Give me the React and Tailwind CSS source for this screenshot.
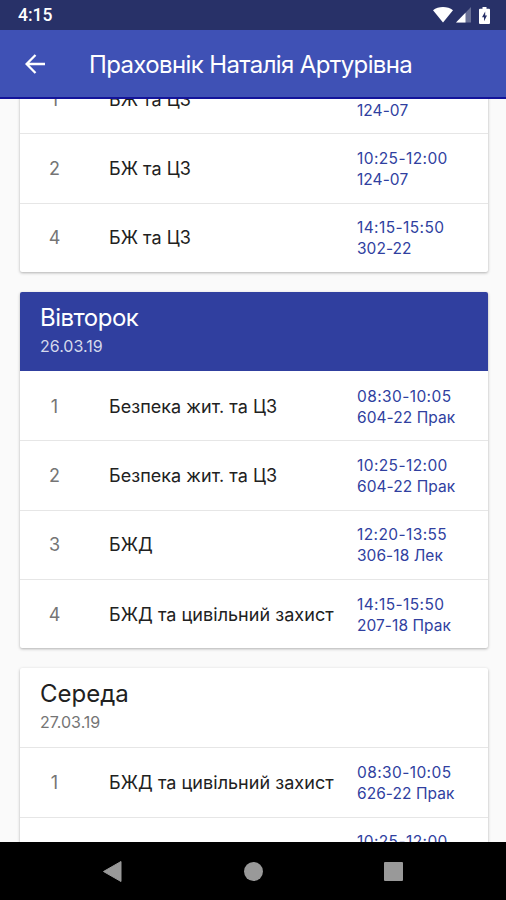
import React from "react";

const days = [
  {
    id: 1,
    lessons: [
      { num: 1, name: "БЖ та ЦЗ", time: "08:30-10:05", room: "124-07" },
      { num: 2, name: "БЖ та ЦЗ", time: "10:25-12:00", room: "124-07" },
      { num: 4, name: "БЖ та ЦЗ", time: "14:15-15:50", room: "302-22" },
    ],
  },
  {
    id: 2,
    title: "Вівторок",
    date: "26.03.19",
    current: true,
    lessons: [
      { num: 1, name: "Безпека жит. та ЦЗ", time: "08:30-10:05", room: "604-22 Прак" },
      { num: 2, name: "Безпека жит. та ЦЗ", time: "10:25-12:00", room: "604-22 Прак" },
      { num: 3, name: "БЖД", time: "12:20-13:55", room: "306-18 Лек" },
      { num: 4, name: "БЖД та цивільний захист", time: "14:15-15:50", room: "207-18 Прак" },
    ],
  },
  {
    id: 3,
    title: "Середа",
    date: "27.03.19",
    lessons: [
      { num: 1, name: "БЖД та цивільний захист", time: "08:30-10:05", room: "626-22 Прак" },
      { num: 2, name: "БЖД та цивільний захист", time: "10:25-12:00", room: "626-22 Прак" },
    ],
  },
];

const StatusBar = () => (
  <div className="flex h-[30px] shrink-0 items-center justify-between bg-[#283168] pl-[18px] pr-4 text-white">
    <span className="pt-[2px] font-[Roboto,sans-serif] text-[17.5px] font-medium leading-none">4:15</span>
    <div className="flex items-center">
      <svg width="20" height="16" viewBox="0 0 20 16" fill="currentColor">
        <path d="M0 3.2C2.8 1 6.2 0 10 0s7.2 1 10 3.2L10 15.5z" />
      </svg>
      <svg className="ml-[3px]" width="15" height="16" viewBox="0 0 15 16" fill="currentColor">
        <path d="M15 0v15.5H0z" opacity="0.3" />
        <path d="M9.5 5.7v9.8H0z" />
      </svg>
      <svg className="ml-2" width="11" height="17" viewBox="0 0 11 17">
        <path d="M3.5 0h4v1.8H10a1 1 0 0 1 1 1V16a1 1 0 0 1-1 1H1a1 1 0 0 1-1-1V2.8a1 1 0 0 1 1-1h2.5z" fill="currentColor" />
        <path d="M6.2 4.5 3 10.2h2v4L8 8.600H6.2z" fill="#283168" />
      </svg>
    </div>
  </div>
);

const AppBar = () => (
  <div className="flex h-[69px] shrink-0 items-center border-b-2 border-[#13139a] bg-[#3f51b5] pl-[25px] text-white">
    <svg width="20" height="20" viewBox="0 0 20 20" fill="none" stroke="currentColor" strokeWidth="2.3">
      <path d="M20 10H2M10.5 1 1.6 10l8.900 9" />
    </svg>
    <h1 className="ml-[44px] whitespace-nowrap pt-[2px] text-[24px] leading-none tracking-[-0.63px]">Праховнік Наталія Артурівна</h1>
  </div>
);

const Lesson = ({ lesson, first }) => (
  <div className={first ? "flex h-[69.33px] items-center pt-px" : "flex h-[69.33px] items-center border-t border-[#e6e6e6]"}>
    <span className="w-[69px] text-center text-[18px] text-[#757575]">{lesson.num}</span>
    <span className="ml-5 w-[248px] whitespace-nowrap text-[18px] tracking-[0.04px] text-[#212121]">{lesson.name}</span>
    <div className="whitespace-nowrap pt-px text-[15.5px] leading-[21px] text-[#303f9f]">
      <p className="tracking-[0.4px]">{lesson.time}</p>
      <p className="tracking-[0.05px]">{lesson.room}</p>
    </div>
  </div>
);

const DayCard = ({ day }) => (
  <div className="w-[467.5px] shrink-0 overflow-hidden rounded-[2px] bg-white shadow-[0_1px_3px_rgba(0,0,0,0.3)]">
    {day.title && (
      <div
        className={
          day.current
            ? "h-[79px] bg-[#303f9f] px-5 pt-[11px] text-white"
            : "h-[79px] px-5 pt-[11px] text-[#212121]"
        }
      >
        <h2 className={day.current ? "text-[24px] leading-[29px] tracking-[-0.5px]" : "text-[24px] leading-[29px]"}>{day.title}</h2>
        <p className={day.current ? "mt-1 text-[16px] leading-5 text-[#d5d9ec]" : "mt-1 text-[16px] leading-5 text-[#757575]"}>
          {day.date}
        </p>
      </div>
    )}
    {day.lessons.map((lesson, index) => (
      <Lesson key={lesson.num} lesson={lesson} first={index === 0 && day.current} />
    ))}
  </div>
);

const NavBar = () => (
  <div className="flex h-[58px] shrink-0 items-center bg-black pl-[103px] text-[#999999]">
    <svg width="19" height="21" viewBox="0 0 19 21" fill="currentColor">
      <path d="M18 .5v20L.5 10.5z" stroke="currentColor" strokeLinejoin="round" />
    </svg>
    <div className="ml-[122px] h-[19px] w-[19px] rounded-full bg-[#999999]" />
    <div className="ml-[121px] h-[19px] w-[19px] rounded-[1px] bg-[#999999]" />
  </div>
);

const App = () => {
  return (
    <div className="flex h-[900px] w-[506px] flex-col overflow-hidden bg-[#fafafa] font-[Inter,sans-serif]">
      <StatusBar />
      <AppBar />
      {/* Schedule, scrolled part of the way down */}
      <div className="min-h-0 flex-1 overflow-hidden">
        <div className="-mt-[35px] flex flex-col gap-5 pl-5">
          {days.map((day) => (
            <DayCard key={day.id} day={day} />
          ))}
        </div>
      </div>
      <NavBar />
    </div>
  );
};

export default App;
